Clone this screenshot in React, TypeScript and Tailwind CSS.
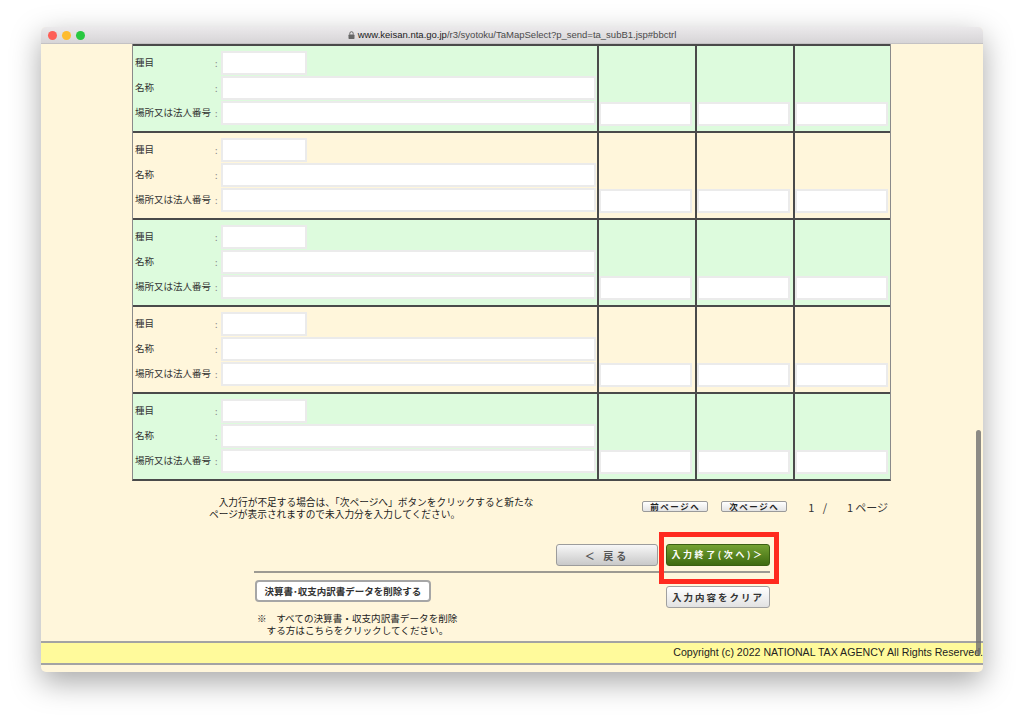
import React from "react";

const jp = { fontFamily: '"Noto Sans CJK JP", "Noto Sans", sans-serif' };

const Field = ({ w }: { w: string }) => (
  <div className={`h-[24px] shrink-0 ${w} bg-white border-2 border-black/[0.08]`} />
);

const EntryRow = ({ green }: { green: boolean }) => {
  const bg = green ? "bg-[#ddfbdd]" : "bg-[#fff6db]";
  return (
    <div className={`flex h-[87px] border-t-2 border-[#4a4a4a] ${bg}`}>
      <div className="w-[466px] shrink-0 border-r-2 border-[#4a4a4a] pl-[2px] pt-[5px] flex flex-col gap-[1px]">
        {[
          ["種目", "w-[86px]"],
          ["名称", "w-[375px]"],
          ["場所又は法人番号", "w-[375px]"],
        ].map(([label, w]) => (
          <div key={label} className="flex items-center h-[24px]">
            <span className="w-[80px] text-[9.5px] text-[#333] leading-none">{label}</span>
            <span className="w-[6px] text-[9px] text-[#888] leading-none">:</span>
            <Field w={w} />
          </div>
        ))}
      </div>
      {[0, 1, 2].map((i) => (
        <div
          key={i}
          className={`flex items-end pb-[5px] ${i < 2 ? "w-[98px] shrink-0 border-r-2 border-[#4a4a4a]" : "flex-1"}`}
        >
          <Field w="w-[93px]" />
        </div>
      ))}
    </div>
  );
};

const SmallBtn = ({ children }: { children: React.ReactNode }) => (
  <div className="h-[11px] w-[66px] flex items-center justify-center rounded-[2px] border border-[#9a9a9a] bg-gradient-to-b from-white to-[#e4e4e4] text-[8.5px] font-bold text-[#222] tracking-[1.5px] leading-none">
    {children}
  </div>
);

export default function App() {
  return (
    <div className="w-[1024px] h-[727px] bg-white overflow-hidden pt-[27px] pl-[41px]" style={jp}>
      <div className="relative w-[942px] h-[645px] rounded-[5px] overflow-hidden flex flex-col bg-[#fff6db] shadow-[0_10px_30px_rgba(0,0,0,0.35)]">
        {/* title bar */}
        <div className="relative h-[17px] flex items-center bg-gradient-to-b from-[#ebe9eb] to-[#d7d5d7] border-b border-[#c4c2c4]">
          <div className="flex gap-[5px] pl-[7px]">
            <span className="w-[9px] h-[9px] rounded-full bg-[#fe5f57]" />
            <span className="w-[9px] h-[9px] rounded-full bg-[#febc2e]" />
            <span className="w-[9px] h-[9px] rounded-full bg-[#28c840]" />
          </div>
          <div
            className="absolute inset-0 flex items-center justify-center gap-[3px] text-[9.5px] text-[#4a4a4a]"
            style={{ fontFamily: '"Liberation Sans", Arial, sans-serif' }}
          >
            <svg width="7" height="8" viewBox="0 0 7 8">
              <rect x="0.5" y="3.5" width="6" height="4.5" rx="0.8" fill="#666" />
              <path d="M1.8 3.6V2.4a1.7 1.7 0 0 1 3.4 0v1.2" stroke="#666" strokeWidth="1" fill="none" />
            </svg>
            <span>
              <span className="text-[#222]">www.keisan.nta.go.jp</span>/r3/syotoku/TaMapSelect?p_send=ta_subB1.jsp#bbctrl
            </span>
          </div>
        </div>

        {/* page */}
        <div className="flex-1 flex flex-col">
          <div className="w-[759px] ml-[91px] border-x border-[#8a8a8a] border-b-2 border-b-[#4a4a4a]">
            {[true, false, true, false, true].map((g, i) => (
              <EntryRow key={i} green={g} />
            ))}
          </div>

          <div className="w-[759px] ml-[91px] flex mt-[15px]">
            <p className="pl-[77px] text-[9.7px] leading-[12px] text-[#222]">
              {"\u3000"}入力行が不足する場合は、「次ページへ」ボタンをクリックすると新たな
              <br />
              ページが表示されますので未入力分を入力してください。
            </p>
            <div className="ml-auto mr-[3px] mt-[5px] flex items-start text-[11px] text-[#333] leading-none">
              <SmallBtn>前ページへ</SmallBtn>
              <span className="w-[13px]" />
              <SmallBtn>次ページへ</SmallBtn>
              <span className="ml-[21px] mt-[1px] tracking-[3px]">1 /</span>
              <span className="ml-[17px] mt-[1px] flex-none">
                1<span className="ml-[2px]">ページ</span>
              </span>
            </div>
          </div>

          <div className="w-[516px] ml-[213px] mt-[24px]">
            <div className="flex justify-end gap-[8px]">
              <div className="w-[102px] h-[22px] flex items-center justify-center rounded-[3px] border border-[#9c9c9c] bg-gradient-to-b from-[#f7f7f7] to-[#c9c9c9] text-[10px] font-bold text-[#555] tracking-[3px]">
                ＜ 戻る
              </div>
              <div className="relative">
                <div className="w-[104px] h-[22px] flex items-center justify-center rounded-[3px] border border-[#3b5f12] bg-gradient-to-b from-[#75a232] to-[#3f6b10] text-[9px] font-bold text-white tracking-[2.6px]">
                  入力終了(次へ)＞
                </div>
                <div className="absolute -left-[7px] -right-[9px] -top-[12px] -bottom-[18px] border-[5px] border-[#ff2a1f] z-10" />
              </div>
            </div>
            <div className="h-[2px] bg-[#9d9a92] mt-[5px]" />
            <div className="flex justify-between mt-[7px]">
              <div>
                <div className="w-[176px] h-[22px] ml-[1px] flex items-center justify-center rounded-[4px] border-2 border-[#a6a6a6] bg-white text-[9.5px] font-bold text-[#333]">
                  決算書･収支内訳書データを削除する
                </div>
                <p className="mt-[10px] ml-[3px] text-[9.6px] leading-[12px] text-[#222] whitespace-pre">
                  {"※　すべての決算書・収支内訳書データを削除\n　する方はこちらをクリックしてください。"}
                </p>
              </div>
              <div className="w-[104px] h-[22px] mt-[6px] flex items-center justify-center rounded-[3px] border border-[#a0a0a0] bg-gradient-to-b from-white to-[#e2e2e2] text-[9.5px] font-bold text-[#333] tracking-[2px]">
                入力内容をクリア
              </div>
            </div>
          </div>
        </div>

        {/* footer */}
        <div className="h-[31px] flex flex-col">
          <div
            className="h-[24px] border-y-2 border-[#a3a3a3] bg-[#fffa9b] flex items-center justify-end text-[10.6px] text-[#222]"
            style={{ fontFamily: '"Liberation Sans", Arial, sans-serif' }}
          >
            Copyright (c) 2022 NATIONAL TAX AGENCY All Rights Reserved.
          </div>
        </div>

        {/* overlay scrollbar */}
        <div className="absolute right-[2px] top-[403px] w-[5px] h-[225px] rounded-full bg-[#6f6f6f]/80" />
      </div>
    </div>
  );
}
